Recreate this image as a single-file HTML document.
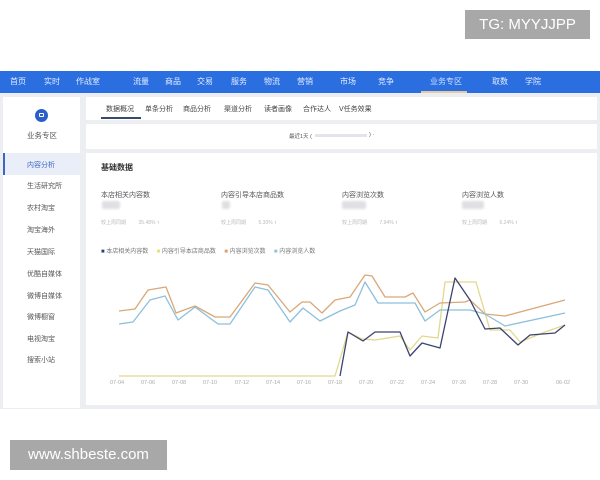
<!DOCTYPE html>
<html><head><meta charset="utf-8"><style>
*{margin:0;padding:0;box-sizing:border-box}
body{width:600px;height:480px;background:#fff;position:relative;overflow:hidden;font-family:"Liberation Sans","Noto Sans CJK SC",sans-serif;}
.abs{position:absolute}
.nav{left:0;top:71px;width:600px;height:22px;background:#2a6ee0;}
.nav span{position:absolute;top:5px;font-size:8px;color:#e8efff;white-space:nowrap}
.gray{left:0;top:93px;width:600px;height:316px;background:#eceef2}
.side{left:3px;top:97px;width:77px;height:311px;background:#fff}
.side .it{position:absolute;left:24px;font-size:7px;color:#555;white-space:nowrap}
.tab{position:absolute;top:104px;font-size:7px;color:#444;white-space:nowrap}
.lab{position:absolute;font-size:7px;color:#555;white-space:nowrap}
.sm{position:absolute;font-size:5px;color:#bbb;white-space:nowrap}
.blur{position:absolute;background:#e0e0e4;border-radius:2px;filter:blur(1px)}
.dt{position:absolute;top:380px;font-size:5.5px;color:#aaa}
.wm{background:#a8a8a8;color:#fff;font-size:15px;text-align:center}
</style></head><body>
<div class="abs nav">
<span style="left:10px">首页</span><span style="left:44px">实时</span><span style="left:76px">作战室</span>
<span style="left:133px">流量</span><span style="left:165px">商品</span><span style="left:197px">交易</span><span style="left:231px">服务</span><span style="left:264px">物流</span><span style="left:297px">营销</span>
<span style="left:340px">市场</span><span style="left:378px">竞争</span>
<span style="left:430px;color:#cfe0ff">业务专区</span><span style="left:492px">取数</span><span style="left:525px">学院</span>
<div class="abs" style="left:421px;top:20px;width:46px;height:2px;background:#e6c9a0"></div>
</div>
<div class="abs gray"></div>
<div class="abs side">
<div class="abs" style="left:32px;top:12px;width:13px;height:13px;border-radius:50%;background:#2a5fc9"></div>
<div class="abs" style="left:36px;top:16px;width:5px;height:4px;border:1px solid #fff;border-radius:1px"></div>
<div class="abs" style="left:24px;top:33px;font-size:7.5px;color:#555">业务专区</div>
<div class="abs" style="left:0;top:56px;width:77px;height:22px;background:#e9eef9;border-left:2px solid #3b66c4"></div>
<div class="it" style="top:63px;color:#3b66c4">内容分析</div>
<div class="it" style="top:84px">生活研究所</div>
<div class="it" style="top:106px">农村淘宝</div>
<div class="it" style="top:128px">淘宝海外</div>
<div class="it" style="top:150px">天猫国际</div>
<div class="it" style="top:172px">优酷自媒体</div>
<div class="it" style="top:194px">微博自媒体</div>
<div class="it" style="top:215px">微博橱窗</div>
<div class="it" style="top:237px">电视淘宝</div>
<div class="it" style="top:258px">搜索小站</div>
</div>
<div class="abs" style="left:86px;top:97px;width:511px;height:23px;background:#fff"></div>
<div class="tab" style="left:106px">数据概况</div>
<div class="abs" style="left:101px;top:117px;width:40px;height:1.5px;background:#3a4a6a"></div>
<div class="tab" style="left:145px">单条分析</div>
<div class="tab" style="left:183px">商品分析</div>
<div class="tab" style="left:224px">渠道分析</div>
<div class="tab" style="left:264px">读者画像</div>
<div class="tab" style="left:303px">合作达人</div>
<div class="tab" style="left:339px">V任务效果</div>
<div class="abs" style="left:86px;top:124px;width:511px;height:25px;background:#fff"></div>
<div class="abs" style="left:289px;top:132px;font-size:5.5px;color:#555">最近1天 (</div>
<div class="abs" style="left:315px;top:134px;width:52px;height:3px;background:#e4e4ea"></div>
<div class="abs" style="left:369px;top:132px;font-size:5.5px;color:#555">) ·</div>
<div class="abs" style="left:86px;top:153px;width:511px;height:252px;background:#fff"></div>
<div class="abs" style="left:101px;top:162px;font-size:8px;color:#333;font-weight:bold">基础数据</div>
<div class="lab" style="left:101px;top:190px">本店相关内容数</div>
<div class="lab" style="left:221px;top:190px">内容引导本店商品数</div>
<div class="lab" style="left:342px;top:190px">内容浏览次数</div>
<div class="lab" style="left:462px;top:190px">内容浏览人数</div>
<div class="blur" style="left:102px;top:201px;width:18px;height:8px"></div>
<div class="blur" style="left:222px;top:201px;width:8px;height:8px"></div>
<div class="blur" style="left:342px;top:201px;width:24px;height:8px"></div>
<div class="blur" style="left:462px;top:201px;width:22px;height:8px"></div>
<div class="sm" style="left:101px;top:219px">较上周同期 &nbsp;&nbsp;&nbsp;&nbsp;&nbsp;&nbsp;&nbsp; 35.48% <b style="color:#c44">↑</b></div>
<div class="sm" style="left:221px;top:219px">较上周同期 &nbsp;&nbsp;&nbsp;&nbsp;&nbsp;&nbsp;&nbsp; 5.30% <b style="color:#c44">↑</b></div>
<div class="sm" style="left:342px;top:219px">较上周同期 &nbsp;&nbsp;&nbsp;&nbsp;&nbsp;&nbsp;&nbsp; 7.94% <b style="color:#c44">↑</b></div>
<div class="sm" style="left:462px;top:219px">较上周同期 &nbsp;&nbsp;&nbsp;&nbsp;&nbsp;&nbsp;&nbsp; 6.24% <b style="color:#c44">↑</b></div>
<div class="sm" style="left:101px;top:246px;color:#777;font-size:6px"><span style="color:#2b3f73">■</span> 本店相关内容数 &nbsp;&nbsp;&nbsp; <span style="color:#e6e07a">■</span> 内容引导本店商品数 &nbsp;&nbsp;&nbsp; <span style="color:#d9a070">■</span> 内容浏览次数 &nbsp;&nbsp;&nbsp; <span style="color:#8ec3df">■</span> 内容浏览人数</div>
<svg class="abs" style="left:0;top:0" width="600" height="480" fill="none" stroke-width="1.3" stroke-linejoin="round">
<polyline stroke="#e2d88c" points="119,376 335,376 348,332 362,339 375,340 400,336 410,350 422,336 438,338 445,282 476,282 490,330 510,330 520,342 545,332 565,325"/>
<polyline stroke="#d9a878" points="119,311 135,309 148,290 166,287 176,313 195,306 215,317 230,317 255,283 268,285 290,312 302,302 310,302 322,313 335,300 350,297 365,275 372,276 385,297 405,297 413,293 425,312 440,303 465,302 470,300 485,314 505,316 565,300"/>
<polyline stroke="#8cc0dc" points="119,324 133,322 150,300 165,296 178,320 195,307 218,324 230,324 255,287 268,290 290,322 303,308 320,321 340,311 355,305 365,282 378,303 415,303 425,321 440,310 470,310 485,314 505,326 565,313"/>
<polyline stroke="#3b4470" points="340,376 348,332 363,341 375,332 400,332 410,356 422,343 440,348 455,278 470,300 485,329 500,328 518,345 530,335 555,333 565,325"/>
</svg>
<div class="dt" style="left:110px">07-04</div><div class="dt" style="left:141px">07-06</div><div class="dt" style="left:172px">07-08</div><div class="dt" style="left:203px">07-10</div><div class="dt" style="left:235px">07-12</div><div class="dt" style="left:266px">07-14</div><div class="dt" style="left:297px">07-16</div><div class="dt" style="left:328px">07-18</div><div class="dt" style="left:359px">07-20</div><div class="dt" style="left:390px">07-22</div><div class="dt" style="left:421px">07-24</div><div class="dt" style="left:452px">07-26</div><div class="dt" style="left:483px">07-28</div><div class="dt" style="left:514px">07-30</div><div class="dt" style="left:556px">06-02</div>
<div class="abs wm" style="left:465px;top:10px;width:125px;height:29px;line-height:29px">TG: MYYJJPP</div>
<div class="abs wm" style="left:10px;top:440px;width:157px;height:30px;line-height:30px">www.shbeste.com</div>
</body></html>
